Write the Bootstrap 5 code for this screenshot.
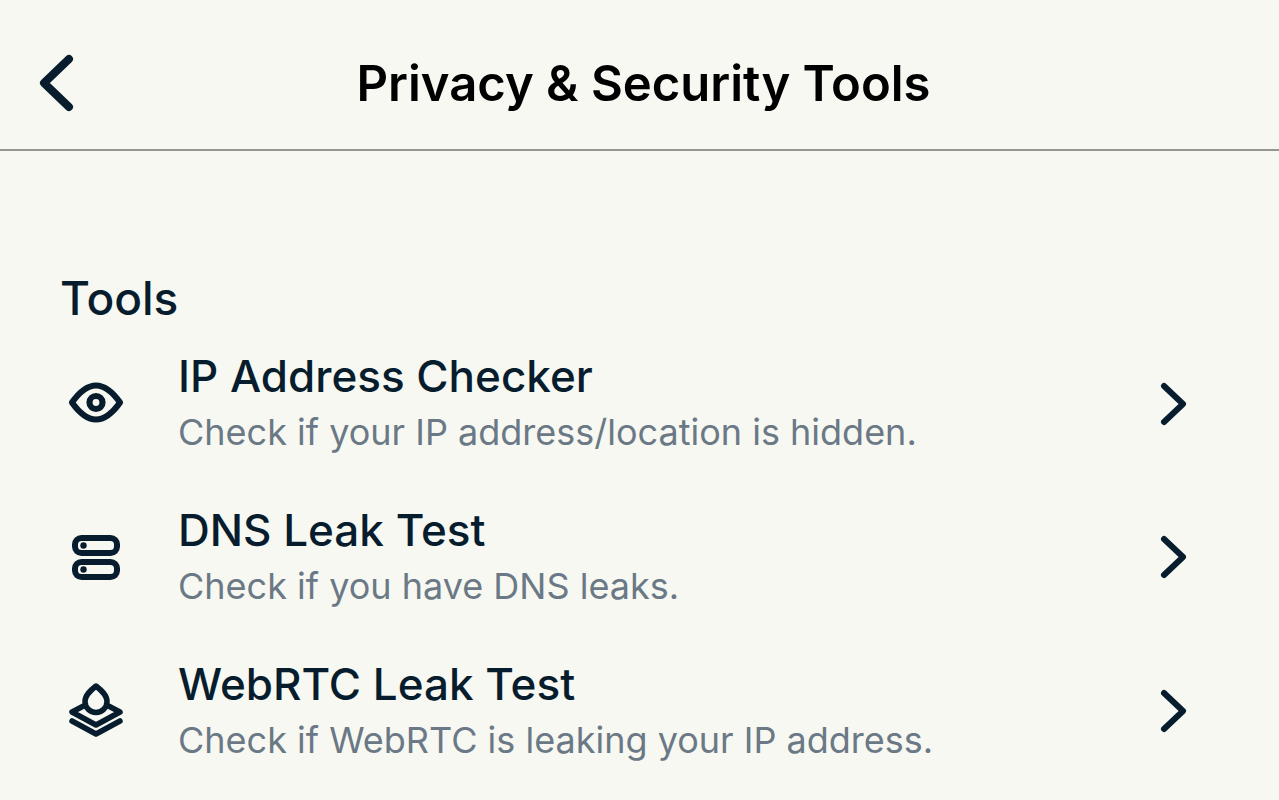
<!DOCTYPE html>
<html lang="en">
<head>
<meta charset="utf-8">
<meta name="viewport" content="width=device-width, initial-scale=1">
<title>Privacy &amp; Security Tools</title>
<link href="https://cdn.jsdelivr.net/npm/bootstrap@5.3.0/dist/css/bootstrap.min.css" rel="stylesheet">
<style>
  body { background: #f7f8f2; color: #071d2e; font-family: Inter, "Liberation Sans", sans-serif; overflow-x: hidden; }
  svg { fill: none; stroke: currentColor; stroke-linecap: round; stroke-linejoin: round; display: block; }
  .app-bar { display: grid; grid-template-columns: 80px 1fr 72px; padding: 16px 0 0; height: 151px; border-bottom: 2px solid #949891; }
  .back-btn { color: inherit; padding: 0 0 0 32px; border: 0; }
  .screen-title { color: #000; font-size: 49px; line-height: 60px; font-weight: 600; padding-top: 2px; }
  .section-title { font-size: 46px; line-height: 56px; font-weight: 500; padding: 119px 60px 0; }
  .tool-list { --bs-list-group-bg: transparent; }
  .tool-row { padding: 20px 80px 22px 64px; color: #071d2e; gap: 50px; }
  .tool-row:hover { color: #071d2e; }
  .tool-name { font-size: 44px; line-height: 60px; font-weight: 500; }
  .tool-note { font-size: 36px; line-height: 52px; color: #6b7885; }
</style>
</head>
<body>
<header class="app-bar align-items-center">
  <button type="button" class="btn back-btn" aria-label="Back">
    <svg width="48" height="64" viewBox="0 0 48 64" stroke-width="8"><path d="M37 8 12 32l25 24"/></svg>
  </button>
  <h1 class="screen-title text-center m-0">Privacy &amp; Security Tools</h1>
</header>
<main>
  <h2 class="section-title m-0">Tools</h2>
  <div class="list-group list-group-flush tool-list">
    <a href="#ip" class="list-group-item list-group-item-action border-0 d-flex align-items-center tool-row">
      <svg class="flex-shrink-0" width="64" height="64" viewBox="0 0 64 64" stroke-width="6.200"><path d="M8 32.500Q20 15.500 32 15.500T56 32.500Q44 49.500 32 49.500T8 32.500Z"/><circle cx="32" cy="32.500" r="6.500"/></svg>
      <span class="flex-grow-1"><span class="d-block tool-name">IP Address Checker</span><span class="d-block tool-note">Check if your IP address/location is hidden.</span></span>
      <svg class="flex-shrink-0" width="48" height="48" viewBox="0 0 48 48" stroke-width="6"><path d="m13 8 19 18-19 18"/></svg>
    </a>
    <a href="#dns" class="list-group-item list-group-item-action border-0 d-flex align-items-center tool-row">
      <svg class="flex-shrink-0" width="64" height="64" viewBox="0 0 64 64" stroke-width="6"><rect x="11" y="14" width="42" height="15" rx="6.500"/><rect x="11" y="38" width="42" height="15" rx="6.500"/><g fill="currentColor" stroke="none"><circle cx="19.500" cy="21.500" r="3.200"/><circle cx="19.500" cy="45.500" r="3.200"/></g></svg>
      <span class="flex-grow-1"><span class="d-block tool-name">DNS Leak Test</span><span class="d-block tool-note">Check if you have DNS leaks.</span></span>
      <svg class="flex-shrink-0" width="48" height="48" viewBox="0 0 48 48" stroke-width="6"><path d="m13 7 19 18-19 18"/></svg>
    </a>
    <a href="#webrtc" class="list-group-item list-group-item-action border-0 d-flex align-items-center tool-row">
      <svg class="flex-shrink-0" width="64" height="64" viewBox="0 0 64 64" stroke-width="5.500"><path d="M32 8C27 12 21 17 21 23.500a11 11 0 0 0 22 0C43 17 37 12 32 8Z"/><path d="M19.500 28 8 34l24 13 24-13-11.500-6M8 43l24 13 24-13"/></svg>
      <span class="flex-grow-1"><span class="d-block tool-name">WebRTC Leak Test</span><span class="d-block tool-note">Check if WebRTC is leaking your IP address.</span></span>
      <svg class="flex-shrink-0" width="48" height="48" viewBox="0 0 48 48" stroke-width="6"><path d="m13 7 19 18-19 18"/></svg>
    </a>
  </div>
</main>
<script src="https://cdn.jsdelivr.net/npm/bootstrap@5.3.0/dist/js/bootstrap.bundle.min.js"></script>
</body>
</html>
